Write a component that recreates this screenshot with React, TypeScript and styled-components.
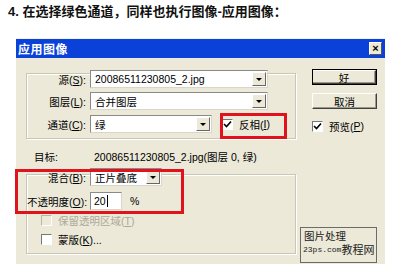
import React from "react";
import styled, { createGlobalStyle } from "styled-components";

const Global = createGlobalStyle`
  html, body { margin: 0; padding: 0; background: #fff; }
  body { font-family: "Liberation Sans", "Noto Sans CJK SC", sans-serif; }
`;

const FONT = `"Liberation Sans", "Noto Sans CJK SC", sans-serif`;

const Page = styled.div`
  width: 395px;
  height: 270px;
  background: #fff;
  overflow: hidden;
  padding: 4px 0 0 8px;
  box-sizing: border-box;
`;

const Heading = styled.div`
  font-family: ${FONT};
  font-size: 13px;
  font-weight: bold;
  color: #111;
  line-height: 16px;
  height: 16px;
`;

const Dialog = styled.div`
  position: relative;
  margin: 18px 0 0 8px;
  width: 369px;
  height: 226px;
  background: #ece9d8;
  border-top: 1px solid #f4f2e8;
  box-sizing: border-box;
  font-family: ${FONT};
  font-size: 10.5px;
  color: #000;
`;

const TitleBar = styled.div`
  height: 19px;
  background: #0a41d9;
  display: flex;
  align-items: center;
  justify-content: space-between;
  padding: 0 3px 0 2px;
`;

const TitleText = styled.span`
  color: #fff;
  font-weight: bold;
  font-size: 12px;
  letter-spacing: 0.5px;
`;

const CloseBtn = styled.div`
  width: 11px;
  height: 11px;
  background: #ece9d8;
  border: 1px solid #fff;
  border-right-color: #555;
  border-bottom-color: #555;
  display: flex;
  align-items: center;
  justify-content: center;
  font-size: 11px;
  font-weight: bold;
  line-height: 1;
  color: #000;
`;

const Body = styled.div`
  display: flex;
  padding: 0 0 0 10px;
`;

const LeftCol = styled.div`
  width: 270px;
  display: flex;
  flex-direction: column;
`;

const RightCol = styled.div`
  display: flex;
  flex-direction: column;
  padding: 11px 0 0 16px;
`;

const Group = styled.div<{ $h: number; $mt: number }>`
  height: ${(p) => p.$h}px;
  margin-top: ${(p) => p.$mt}px;
  border: 1px solid #c9c6b6;
  box-shadow: inset 1px 1px 0 #fff, 1px 1px 0 #fff;
  box-sizing: border-box;
  display: flex;
  flex-direction: column;
`;

const Row = styled.div<{ $h: number; $mt?: number }>`
  display: flex;
  align-items: center;
  height: ${(p) => p.$h}px;
  margin-top: ${(p) => p.$mt ?? 0}px;
`;

const Label = styled.span<{ $w?: number }>`
  width: ${(p) => p.$w ?? 63}px;
  text-align: right;
  padding-right: 4px;
  box-sizing: border-box;
  white-space: nowrap;
`;

const U = styled.span`
  text-decoration: underline;
`;

const Combo = styled.div<{ $w: number }>`
  width: ${(p) => p.$w}px;
  height: 18px;
  flex: none;
  background: #fff;
  border: 1px solid #8a8a8a;
  border-right-color: #d8d6ca;
  border-bottom-color: #d8d6ca;
  box-sizing: border-box;
  display: flex;
  align-items: center;
  padding-left: 4px;
  white-space: nowrap;
`;

const ComboText = styled.span`
  flex: 1;
  overflow: hidden;
`;

const Arrow = styled.div`
  width: 14px;
  height: 14px;
  margin-right: 1px;
  background: #ece9d8;
  border: 1px solid #fff;
  border-right-color: #666;
  border-bottom-color: #666;
  box-sizing: border-box;
  display: flex;
  align-items: center;
  justify-content: center;
  &::after {
    content: "";
    border-left: 3px solid transparent;
    border-right: 3px solid transparent;
    border-top: 3px solid #000;
  }
`;

const Check = styled.span<{ $disabled?: boolean }>`
  width: 11px;
  height: 11px;
  box-sizing: border-box;
  border-top: 1px solid ${(p) => (p.$disabled ? "#b8b6a8" : "#777")};
  border-left: 1px solid ${(p) => (p.$disabled ? "#b8b6a8" : "#777")};
  border-right: 1px solid #fff;
  border-bottom: 1px solid #fff;
  background: ${(p) => (p.$disabled ? "#ece9d8" : "#fff")};
  display: inline-flex;
  align-items: center;
  justify-content: center;
  margin-right: 6px;
  flex: none;
`;

const CheckRow = styled.div<{ $disabled?: boolean; $pl?: number; $h?: number }>`
  display: flex;
  align-items: center;
  height: ${(p) => p.$h ?? 19}px;
  padding-left: ${(p) => p.$pl ?? 0}px;
  color: ${(p) => (p.$disabled ? "#aca899" : "#000")};
  white-space: nowrap;
`;

const Button = styled.div`
  width: 65px;
  height: 16px;
  box-sizing: border-box;
  border: 1px solid #fff;
  border-right-color: #404040;
  border-bottom-color: #404040;
  box-shadow: inset -1px -1px 0 #9d9a8c;
  display: flex;
  align-items: center;
  justify-content: center;
  margin-bottom: 8px;
`;

const DefaultButton = styled(Button)`
  outline: 1px solid #000;
  outline-offset: -1px;
  border-width: 2px 2px 2px 1px;
  border-color: #fff #404040 #404040 #fff;
`;

const Target = styled.div`
  display: flex;
  align-items: center;
  height: 18px;
  margin-top: 8px;
  padding-left: 8px;
  white-space: nowrap;
`;

const TargetLabel = styled.span`
  width: 60px;
`;

const TextInput = styled.div`
  width: 32px;
  height: 18px;
  background: #fff;
  border: 1px solid #8a8a8a;
  border-right-color: #d8d6ca;
  border-bottom-color: #d8d6ca;
  box-sizing: border-box;
  padding-left: 3px;
  display: flex;
  align-items: center;
  margin-right: 8px;
  &::after {
    content: "";
    width: 1px;
    height: 12px;
    background: #000;
    margin-left: 1px;
  }
`;

const RedBox = styled.div<{ $x: number; $y: number; $w: number; $h: number }>`
  position: absolute;
  left: ${(p) => p.$x}px;
  top: ${(p) => p.$y}px;
  width: ${(p) => p.$w}px;
  height: ${(p) => p.$h}px;
  border: 3px solid #e0121c;
  box-sizing: border-box;
  pointer-events: none;
`;

const Watermark = styled.div`
  position: absolute;
  left: 284px;
  top: 188px;
  width: 77px;
  height: 36px;
  background: #ece9d8;
  border: 1px solid #6b6b6b;
  box-sizing: border-box;
  font-family: "Noto Sans CJK SC", sans-serif;
  color: #222;
  padding: 2px 0 0 2px;
  line-height: 1;
  white-space: nowrap;
`;

const WmTop = styled.div`
  font-size: 10.5px;
  line-height: 11px;
  padding-left: 1px;
`;

const WmBottom = styled.div`
  display: flex;
  align-items: flex-end;
  margin-top: 2px;
`;

const WmSmall = styled.span`
  font-family: "Liberation Mono", monospace;
  font-size: 8px;
  line-height: 8px;
  padding-bottom: 2px;
`;

const WmBig = styled.span`
  font-size: 11px;
  line-height: 13px;
`;

const Tick = () => (
  <svg width="9" height="9" viewBox="0 0 9 9">
    <path d="M1 4 L3.5 6.5 L8 1.5" stroke="#000" strokeWidth="1.6" fill="none" />
  </svg>
);

export default function App() {
  return (
    <>
      <Global />
      <Page>
        <Heading>4. 在选择绿色通道，同样也执行图像-应用图像：</Heading>
        <Dialog>
          <TitleBar>
            <TitleText>应用图像</TitleText>
            <CloseBtn>×</CloseBtn>
          </TitleBar>
          <Body>
            <LeftCol>
              <Group $h={66} $mt={15}>
                <Row $h={18} $mt={-4}>
                  <Label>
                    源(<U>S</U>):
                  </Label>
                  <Combo $w={178}>
                    <ComboText>20086511230805_2.jpg</ComboText>
                    <Arrow />
                  </Combo>
                </Row>
                <Row $h={18} $mt={4}>
                  <Label>
                    图层(<U>L</U>):
                  </Label>
                  <Combo $w={178}>
                    <ComboText>合并图层</ComboText>
                    <Arrow />
                  </Combo>
                </Row>
                <Row $h={18} $mt={5}>
                  <Label>
                    通道(<U>C</U>):
                  </Label>
                  <Combo $w={122}>
                    <ComboText>绿</ComboText>
                    <Arrow />
                  </Combo>
                  <CheckRow $pl={10}>
                    <Check>
                      <Tick />
                    </Check>
                    反相(<U>I</U>)
                  </CheckRow>
                </Row>
              </Group>
              <Target>
                <TargetLabel>目标:</TargetLabel>
                20086511230805_2.jpg(图层 0, 绿)
              </Target>
              <Group $h={80} $mt={9}>
                <Row $h={16} $mt={-6}>
                  <Label>
                    混合(<U>B</U>):
                  </Label>
                  <Combo $w={72}>
                    <ComboText>正片叠底</ComboText>
                    <Arrow />
                  </Combo>
                </Row>
                <Row $h={18} $mt={7}>
                  <Label>
                    不透明度(<U>O</U>):
                  </Label>
                  <TextInput>20</TextInput>%
                </Row>
                <CheckRow $disabled $pl={14} $h={19} style={{ marginTop: 1 }}>
                  <Check $disabled />
                  保留透明区域(<U>T</U>)
                </CheckRow>
                <CheckRow $pl={14} $h={19}>
                  <Check />
                  蒙版(<U>K</U>)...
                </CheckRow>
              </Group>
            </LeftCol>
            <RightCol>
              <DefaultButton>好</DefaultButton>
              <Button>取消</Button>
              <CheckRow $h={20} style={{ marginTop: -1 }}>
                <Check>
                  <Tick />
                </Check>
                预览(<U>P</U>)
              </CheckRow>
            </RightCol>
          </Body>
          <RedBox $x={204} $y={74} $w={67} $h={26} />
          <RedBox $x={-1} $y={130} $w={169} $h={45} />
          <Watermark>
            <WmTop>图片处理</WmTop>
            <WmBottom>
              <WmSmall>23ps.com</WmSmall>
              <WmBig>教程网</WmBig>
            </WmBottom>
          </Watermark>
        </Dialog>
      </Page>
    </>
  );
}
